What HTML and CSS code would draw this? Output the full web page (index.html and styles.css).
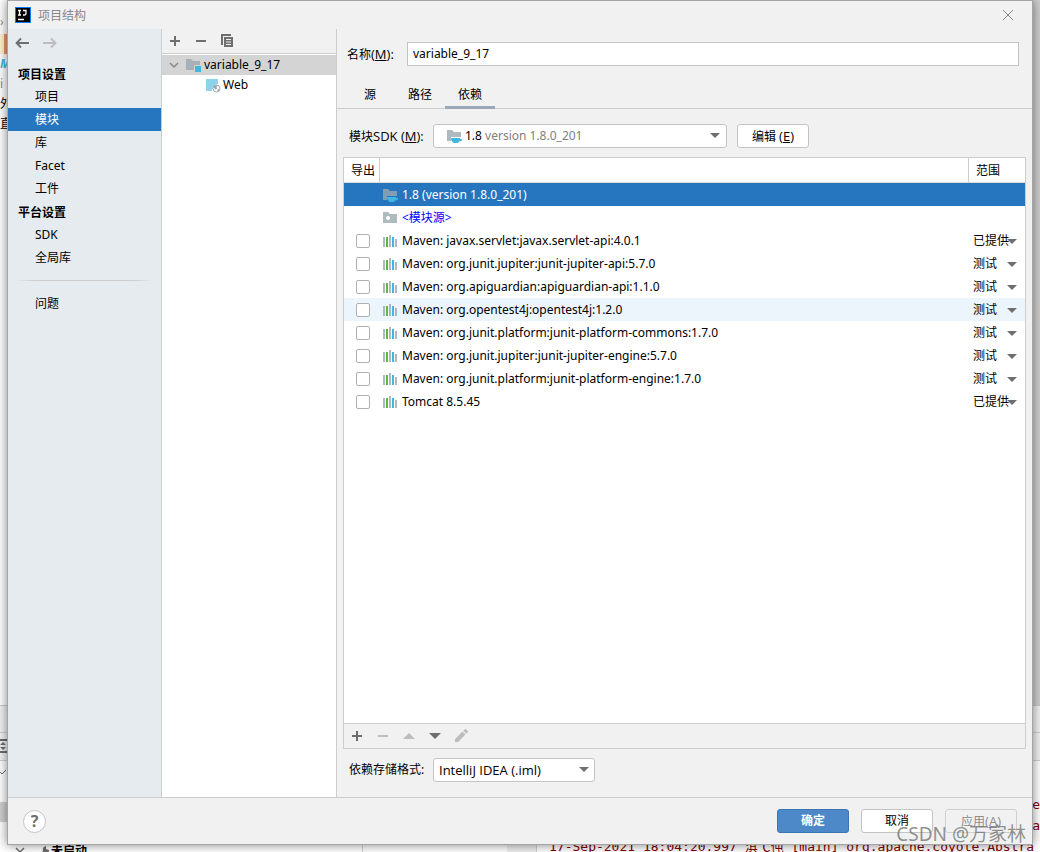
FILE: index.html
```html
<!DOCTYPE html>
<html lang="zh-CN">
<head>
<meta charset="utf-8">
<title>项目结构</title>
<link rel="stylesheet" href="styles.css">
</head>
<body>
<svg class="sprite" aria-hidden="true">
  <symbol id="plus" viewBox="0 0 16 16"><path d="M7 3h2v4h4v2H9v4H7V9H3V7h4z"/></symbol>
  <symbol id="minus" viewBox="0 0 16 16"><path d="M3 7h10v2H3z"/></symbol>
  <symbol id="down" viewBox="0 0 16 16"><path d="M2 5h12l-6 6z"/></symbol>
  <symbol id="up" viewBox="0 0 16 16"><path d="M2 11h12L8 5z"/></symbol>
  <symbol id="pencil" viewBox="0 0 16 16"><path d="M2 14v-3l7.500-7.500 3 3L5 14zM10.300 2.700l1.400-1.400q.8-.6 1.600.1l1.300 1.300q.7.8.1 1.600l-1.400 1.400z"/></symbol>
  <symbol id="sdk" viewBox="0 0 16 16"><path fill="#9aa7b0" fill-opacity=".8" d="M1 2h5l2 2h7v5H5v4H1z"/><path fill="#40b6e0" d="M5 10h9v1h2q0 2.500-3 2.500-.5 1.500-2 1.500H8q-3-1.500-3-5z"/></symbol>
  <symbol id="source" viewBox="0 0 16 16"><path fill="#9aa7b0" fill-opacity=".8" fill-rule="evenodd" d="M1 2h5l2 2h7v9H1zM6 6a2 2 0 1 0 .1 0z"/></symbol>
  <symbol id="library" viewBox="0 0 16 16"><path fill="#9aa7b0" fill-opacity=".8" d="M1 4h2v10H1zM7 2h2v12H7zM13 6h2v8h-2z"/><path fill="#62b543" d="M4 4h2v10H4z"/><path fill="#40b6e0" d="M10 4h2v10h-2z"/></symbol>
</svg>

<div class="backdrop" aria-hidden="true">
  <div class="gutter">
    <span class="peek peek-light">›</span>
    <span class="peek peek-tab"></span>
    <span class="peek peek-m">M</span>
    <span class="peek peek-light">i</span>
    <span class="peek">外</span>
    <span class="peek">直</span>
  </div>
  <div class="right-edge"></div>
  <div class="lower">
    <div class="lower-bar"></div>
    <div class="lower-tools"><svg viewBox="0 0 8 16" width="8" height="16"><path fill="#6e6e6e" d="M0 1h8v2H0zM0 13h8v2H0zM3 4l3 3H0zM3 12l3-3H0z"/></svg></div>
    <div class="lower-tick"><svg viewBox="0 0 8 8" width="8" height="8"><path fill="none" stroke="#6e6e6e" d="M0 3l2 2 4-4"/></svg></div>
    <div class="lower-selected"></div>
    <div class="lower-tree"><svg viewBox="0 0 34 16" width="34" height="16"><path fill="none" stroke="#6e6e6e" stroke-width="1.500" d="M1 5l4 4 4-4"/><path fill="#6e6e6e" d="M23 13l5-5q-1-4 3-5v3l3 1q0 4-4 4l-4 4z"/></svg>未启动</div>
    <div class="lower-line"></div>
    <div class="lower-line second"></div>
  </div>
  <div class="console">
    <div class="tail">re</div>
    <div class="tail">ra</div>
    <div>17-Sep-2021 18:04:20.997 淇℃伅 [main] org.apache.coyote.Abstra</div>
  </div>
</div>

<main class="dialog">
  <header class="titlebar">
    <svg class="logo" viewBox="0 0 16 16"><path fill="#087cfa" d="M0 0h16v16H0z"/><path fill="#000" d="M1 1h14v14H1z"/><path fill="none" stroke="#fff" stroke-width="1.300" d="M3 3.500h3M4.500 3.500v4.500M3 8h3M8 3.500h3v3q0 1.500-1.500 1.500H8M3 12.500h6"/></svg>
    <h1>项目结构</h1>
    <button class="close" aria-label="关闭"><svg viewBox="0 0 12 12" width="12" height="12"><path fill="none" stroke="#888" d="M1 1l10 10M11 1L1 11"/></svg></button>
  </header>

  <div class="content">
    <nav class="sidebar">
      <div class="history">
        <button aria-label="后退"><svg viewBox="0 0 16 16" width="16" height="16"><path fill="none" stroke="#6e6e6e" stroke-width="1.800" d="M14 8H2M6 3.500L1.500 8 6 12.500"/></svg></button>
        <button aria-label="前进" disabled><svg viewBox="0 0 16 16" width="16" height="16"><path fill="none" stroke="#bdbdbd" stroke-width="1.800" d="M1 8h12M9 3.500L13.500 8 9 12.500"/></svg></button>
      </div>
      <h2>项目设置</h2>
      <a href="#project">项目</a>
      <a href="#modules" class="current">模块</a>
      <a href="#libraries">库</a>
      <a href="#facet">Facet</a>
      <a href="#artifacts">工件</a>
      <h2>平台设置</h2>
      <a href="#sdk">SDK</a>
      <a href="#global">全局库</a>
      <hr>
      <a href="#problems">问题</a>
    </nav>

    <section class="modules">
      <div class="toolbar">
        <button aria-label="添加"><svg class="icon"><use href="#plus"/></svg></button>
        <button aria-label="移除"><svg class="icon"><use href="#minus"/></svg></button>
        <button aria-label="复制"><svg class="icon" viewBox="0 0 16 16"><path d="M2 1h10v2H4v9H2z"/><path fill-rule="evenodd" d="M5 4h9v10H5zM7 6v1h5V6zM7 8.500v1h5v-1zM7 11v1h5v-1z"/></svg></button>
      </div>
      <div class="tree">
        <div class="node selected">
          <svg class="icon" viewBox="0 0 16 16"><path fill="none" stroke="#888" stroke-width="1.500" d="M4 6l4 4 4-4"/></svg>
          <svg class="icon" viewBox="0 0 16 16"><path fill="#a5b0b8" d="M1 2h5l2 2h7v4H9v5H1z"/><path fill="#40b6e0" d="M10 9h6v6h-6z"/></svg>
          <span>variable_9_17</span>
        </div>
        <div class="node child">
          <svg class="icon" viewBox="0 0 16 16"><path fill="#8cd3ec" d="M1 2h12v5q-6 0-6 7H1z"/><circle cx="11.500" cy="11.500" r="3.500" fill="#fff" stroke="#9aa7b0"/><path fill="#9aa7b0" d="M8.500 9.500q2-2 4-1l-1 2 1 1-2 1-2-2zM12.500 12.500l2-1-1 3h-1z"/></svg>
          <span>Web</span>
        </div>
      </div>
    </section>

    <section class="editor">
      <div class="name-row">
        <label for="name">名称<span class="latin">(<u>M</u>):</span></label>
        <input id="name" type="text" value="variable_9_17">
      </div>
      <div class="tabs" role="tablist">
        <button role="tab">源</button>
        <button role="tab">路径</button>
        <button role="tab" aria-selected="true" class="active">依赖</button>
      </div>
      <div class="sdk-row">
        <label for="sdk-box">模块<span class="latin">SDK (<u>M</u>):</span></label>
        <button id="sdk-box" class="sdk-box" aria-haspopup="listbox">
          <svg class="icon"><use href="#sdk"/></svg>
          <span>1.8 <span class="muted">version 1.8.0_201</span></span>
          <svg class="arrow" viewBox="0 0 10 6"><path d="M0 0h10L5 5z"/></svg>
        </button>
        <button class="btn">编辑 <span class="latin">(<u>E</u>)</span></button>
      </div>

      <div class="panel">
        <div class="table-area">
        <table>
          <colgroup><col class="c-export"><col><col class="c-scope"></colgroup>
          <thead><tr><th><span>导出</span></th><th></th><th><span>范围</span></th></tr></thead>
          <tbody>
            <tr class="selected"><td></td><td><div class="entry"><svg class="icon"><use href="#sdk"/></svg>1.8 (version 1.8.0_201)</div></td><td></td></tr>
            <tr><td></td><td><div class="entry module-source"><svg class="icon"><use href="#source"/></svg>&lt;模块源&gt;</div></td><td></td></tr>
            <tr><td><input type="checkbox" id="d1"></td><td><label class="entry" for="d1"><svg class="icon"><use href="#library"/></svg>Maven: javax.servlet:javax.servlet-api:4.0.1</label></td><td><button class="scope">已提供<svg class="arrow" viewBox="0 0 10 6"><path d="M0 0h10L5 5z"/></svg></button></td></tr>
            <tr><td><input type="checkbox" id="d2"></td><td><label class="entry" for="d2"><svg class="icon"><use href="#library"/></svg>Maven: org.junit.jupiter:junit-jupiter-api:5.7.0</label></td><td><button class="scope">测试<svg class="arrow" viewBox="0 0 10 6"><path d="M0 0h10L5 5z"/></svg></button></td></tr>
            <tr><td><input type="checkbox" id="d3"></td><td><label class="entry" for="d3"><svg class="icon"><use href="#library"/></svg>Maven: org.apiguardian:apiguardian-api:1.1.0</label></td><td><button class="scope">测试<svg class="arrow" viewBox="0 0 10 6"><path d="M0 0h10L5 5z"/></svg></button></td></tr>
            <tr class="hovered"><td><input type="checkbox" id="d4"></td><td><label class="entry" for="d4"><svg class="icon"><use href="#library"/></svg>Maven: org.opentest4j:opentest4j:1.2.0</label></td><td><button class="scope">测试<svg class="arrow" viewBox="0 0 10 6"><path d="M0 0h10L5 5z"/></svg></button></td></tr>
            <tr><td><input type="checkbox" id="d5"></td><td><label class="entry" for="d5"><svg class="icon"><use href="#library"/></svg>Maven: org.junit.platform:junit-platform-commons:1.7.0</label></td><td><button class="scope">测试<svg class="arrow" viewBox="0 0 10 6"><path d="M0 0h10L5 5z"/></svg></button></td></tr>
            <tr><td><input type="checkbox" id="d6"></td><td><label class="entry" for="d6"><svg class="icon"><use href="#library"/></svg>Maven: org.junit.jupiter:junit-jupiter-engine:5.7.0</label></td><td><button class="scope">测试<svg class="arrow" viewBox="0 0 10 6"><path d="M0 0h10L5 5z"/></svg></button></td></tr>
            <tr><td><input type="checkbox" id="d7"></td><td><label class="entry" for="d7"><svg class="icon"><use href="#library"/></svg>Maven: org.junit.platform:junit-platform-engine:1.7.0</label></td><td><button class="scope">测试<svg class="arrow" viewBox="0 0 10 6"><path d="M0 0h10L5 5z"/></svg></button></td></tr>
            <tr><td><input type="checkbox" id="d8"></td><td><label class="entry" for="d8"><svg class="icon"><use href="#library"/></svg>Tomcat 8.5.45</label></td><td><button class="scope">已提供<svg class="arrow" viewBox="0 0 10 6"><path d="M0 0h10L5 5z"/></svg></button></td></tr>
          </tbody>
        </table>
        </div>
        <div class="toolbar">
          <button aria-label="添加依赖"><svg class="icon"><use href="#plus"/></svg></button>
          <button aria-label="移除依赖" disabled><svg class="icon"><use href="#minus"/></svg></button>
          <button aria-label="上移" disabled><svg class="icon"><use href="#up"/></svg></button>
          <button aria-label="下移"><svg class="icon"><use href="#down"/></svg></button>
          <button aria-label="编辑依赖" disabled><svg class="icon"><use href="#pencil"/></svg></button>
        </div>
      </div>

      <div class="format-row">
        <label for="format">依赖存储格式:</label>
        <div class="select-wrap">
          <select id="format"><option>IntelliJ IDEA (.iml)</option><option>Eclipse (.classpath)</option></select>
          <svg class="arrow" viewBox="0 0 10 6"><path d="M0 0h10L5 5z"/></svg>
        </div>
      </div>
    </section>
  </div>

  <footer>
    <button class="help" aria-label="帮助">?</button>
    <button class="btn primary">确定</button>
    <button class="btn">取消</button>
    <button class="btn" disabled>应用<span class="latin">(<u>A</u>)</span></button>
  </footer>
</main>
<div class="watermark">CSDN @万家林</div>
</body>
</html>
```
FILE: styles.css
```css
* { box-sizing: border-box; }

body {
  margin: 0;
  min-height: 100vh;
  display: flex;
  position: relative;
  overflow: hidden;
  background: #fff;
  color: #000;
  font: 12px/16px "Noto Sans", "Noto Sans CJK SC", sans-serif;
}

button, input, select { font: inherit; color: inherit; }
button { padding: 0; border: 0; background: none; }
h1, h2 { margin: 0; font-size: 12px; }
.sprite { position: absolute; width: 0; height: 0; }
.icon { width: 16px; height: 16px; flex: none; fill: #6e6e6e; }
.arrow { width: 10px; height: 6px; flex: none; fill: #6e6e6e; }
button:disabled .icon { fill: #bdbdbd; }

.latin, .format-row select {
  font-family: "Open Sans", "Noto Sans CJK SC", sans-serif;
  font-size: 13px;
}

/* editor window behind the dialog */
.backdrop { position: absolute; inset: 0; overflow: hidden; background: #fff; }
.gutter { width: 8px; padding-top: 12px; overflow: hidden; }
.peek { display: block; height: 20px; line-height: 20px; overflow: hidden; }
.peek-light { color: #888; }
.peek-tab { margin-top: 2px; background: linear-gradient(90deg, #fbf5d0 50%, #eb9a68 50%); }
.peek-m { color: #40b6e0; font-style: italic; font-weight: bold; }
.right-edge { position: absolute; top: 0; right: 0; width: 8px; height: 705px; background: #cfcfcf; }
.lower { position: absolute; top: 705px; bottom: 0; left: 0; right: 0; border-top: 1px solid #c9c9c9; }
.lower-bar { height: 27px; background: #f2f2f2; border-bottom: 1px solid #d1d1d1; }
.lower-tools { height: 28px; padding-top: 5px; background: #f2f2f2; border-bottom: 1px solid #d1d1d1; }
.lower-tick { height: 41px; padding-top: 4px; }
.lower-selected { width: 8px; height: 20px; background: #d0d0d0; }
.lower-tree { display: flex; align-items: center; gap: 2px; padding: 21px 15px 0; font-weight: bold; }
.lower-line { position: absolute; left: 362px; top: 56px; bottom: 0; width: 175px; border: solid #d1d1d1; border-width: 0 1px; }
.lower-line.second { left: 507px; width: 30px; background: #efefef; border-left: 0; }
.console {
  position: absolute; left: 549px; right: 0; top: 794px;
  color: #7f0000; font: 13px/21px "DejaVu Sans Mono", "Noto Sans CJK SC", monospace;
  white-space: nowrap;
}
.tail { text-align: right; }

.dialog {
  position: relative;
  flex: 1;
  display: flex;
  flex-direction: column;
  margin: 0 7px 7px;
  border: 1px solid #a5a5a5;
  background: #f1f1f1;
  box-shadow: 0 0 10px rgba(0, 0, 0, .5);
}

.titlebar { display: flex; align-items: center; height: 28px; padding: 0 18px 0 7px; }
.logo { width: 16px; height: 16px; margin-right: 7px; }
.titlebar h1 { flex: 1; padding-top: 1px; color: #888; font-weight: normal; }
.close { height: 12px; display: flex; }

.content { flex: 1; display: grid; grid-template-columns: 154px 175px minmax(0, 1fr); border-bottom: 1px solid #cdcdcd; }

.sidebar { background: #e6ebef; border-right: 1px solid #cdcdcd; }
.history { display: flex; gap: 11px; padding: 6px 7px 11px; }
.history button { display: flex; }
.sidebar h2, .sidebar a { display: block; height: 23px; line-height: 23px; }
.sidebar h2 { padding-left: 10px; line-height: 25px; }
.sidebar a { padding-left: 27px; color: inherit; text-decoration: none; }
.sidebar a.current { background: #2675bf; color: #fff; }
.sidebar hr { margin: 11px 7px; height: 1px; border: 0; background: linear-gradient(90deg, transparent, #cdcdcd 15%, #cdcdcd 85%, transparent); }

.toolbar { display: flex; align-items: center; gap: 10px; height: 25px; padding: 0 5px; }
.toolbar button { display: flex; }
.modules { display: flex; flex-direction: column; background: #fff; border-right: 1px solid #cdcdcd; }
.modules .toolbar { background: #f1f1f1; border-bottom: 1px solid #cdcdcd; }
.node { display: flex; align-items: center; gap: 3px; height: 20px; padding-left: 4px; }
.node.selected { margin-top: 1px; background: #d4d4d4; }
.node.child { padding-left: 43px; gap: 2px; }

.editor { display: flex; flex-direction: column; }
.name-row { display: flex; align-items: center; gap: 10px; padding: 13px 13px 0 10px; }
.name-row label { width: 50px; }
.name-row input { flex: 1; min-width: 0; height: 24px; padding: 0 5px 1px; border: 1px solid #c4c4c4; background: #fff; }

.tabs { display: flex; height: 43px; padding: 15px 0 0 8px; border-bottom: 1px solid #cdcdcd; }
.tabs button { width: 50px; height: 28px; padding-top: 2px; border-bottom: 3px solid transparent; }
.tabs .active { border-color: #9ba8ba; }

.sdk-row { display: flex; align-items: center; gap: 10px; padding: 15px 12px 9px; }
.sdk-row label, .format-row label { width: 74px; white-space: nowrap; }
.sdk-box { display: flex; align-items: center; gap: 3px; width: 294px; height: 24px; padding: 0 6px 0 12px; border: 1px solid #c4c4c4; border-radius: 3px; background: #fff; }
.sdk-box .arrow { margin-left: auto; }
.muted { color: #808080; }
.btn { width: 72px; height: 24px; border: 1px solid #c4c4c4; border-radius: 3px; background: #fff; }

.panel { flex: 1; display: flex; flex-direction: column; margin: 0 6px; border: 1px solid #cdcdcd; }
.table-area { flex: 1; background: #fff; }
table { width: 100%; table-layout: fixed; border-collapse: separate; border-spacing: 0; }
.c-export { width: 36px; }
.c-scope { width: 57px; }
th, td { padding: 0; text-align: left; font-weight: normal; }
th { height: 25px; padding: 2px 0 0; border-bottom: 1px solid #dcdcdc; }
th span { display: block; padding-left: 7px; }
th:first-child { border-right: 1px solid #cdcdcd; }
th:last-child { border-left: 1px solid #cdcdcd; }
td { height: 23px; }
td input { display: block; appearance: none; width: 14px; height: 14px; margin: 0 0 0 12px; border: 1px solid #b0b0b0; border-radius: 2px; background: #fff; }
.entry { display: flex; align-items: center; gap: 4px; padding-left: 2px; white-space: nowrap; }
.selected .entry { color: #fff; }
tr.selected { background: #2675bf; }
tr.hovered { background: #edf5fc; }
.module-source { color: #00f; }
.scope { position: relative; display: block; width: 100%; padding-left: 5px; text-align: left; white-space: nowrap; }
.scope .arrow { position: absolute; right: 8px; top: 6px; }
.panel .toolbar { border-top: 1px solid #cdcdcd; }

.format-row { display: flex; align-items: center; gap: 10px; padding: 9px 12px 15px; }
.select-wrap { display: grid; align-items: center; }
.select-wrap > * { grid-area: 1 / 1; }
.select-wrap .arrow { justify-self: end; margin-right: 6px; pointer-events: none; }
.format-row select { appearance: none; width: 162px; height: 24px; padding: 0 5px; border: 1px solid #c4c4c4; border-radius: 3px; background: #fff; }

footer { display: flex; align-items: center; gap: 12px; height: 46px; padding: 0 15px; }
.help { width: 23px; height: 23px; margin-right: auto; border: 1px solid #c4c4c4; border-radius: 50%; background: #fff; color: #6e6e6e; font-size: 16px; font-weight: bold; }
.btn.primary { border-color: #3d75b2; background: #4d89c9; color: #fff; font-weight: bold; }
.btn:disabled { background: none; color: #8c8c8c; border-color: #cfcfcf; }

.watermark { position: absolute; right: 14px; bottom: 5px; color: rgba(110, 110, 110, .75); font-size: 19px; line-height: 26px; }
```
